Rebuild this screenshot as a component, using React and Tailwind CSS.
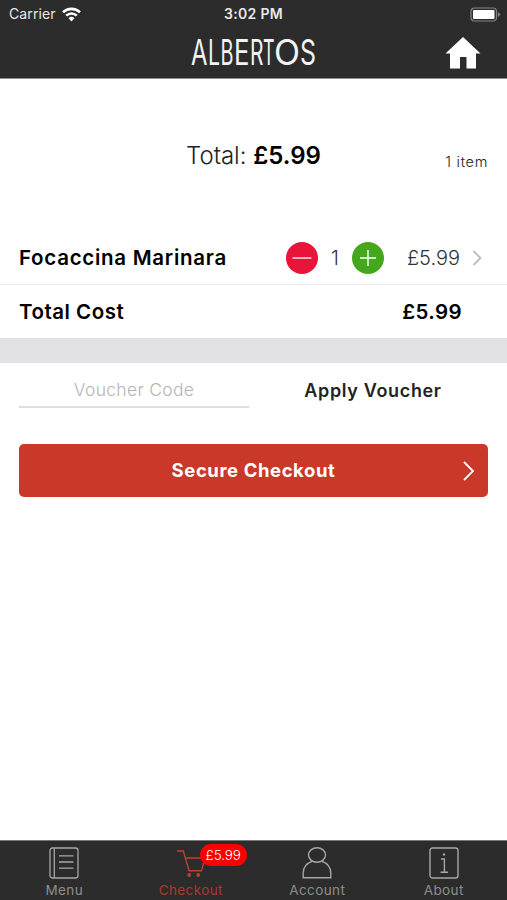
import React from 'react';

const MenuIcon = () => (
    <svg width="30" height="32" viewBox="0 0 30 32" fill="none" stroke="#a6a6a6" strokeWidth="1.3">
        <rect x="1" y="1" width="28" height="30" rx="2.5" />
        <path d="M5.3 1v30" />
        <path d="M10 8.8h14.5M10 15h14.5M10 21.2h14.5" />
    </svg>
);

const CartIcon = () => (
    <svg className="mt-[2px]" width="30" height="28" viewBox="0 0 30 28" fill="none" stroke="#c0402f" strokeWidth="1.4">
        <path d="M1 1h6.3l5.8 19.7h12.4L29 8H9.6" />
        <circle cx="13.2" cy="25" r="1.9" fill="#c0402f" stroke="none" />
        <circle cx="22.2" cy="25" r="1.9" fill="#c0402f" stroke="none" />
    </svg>
);

const AccountIcon = () => (
    <svg width="30" height="32" viewBox="0 0 30 32" fill="none" stroke="#a6a6a6" strokeWidth="1.4">
        <ellipse cx="15" cy="8" rx="8.5" ry="7.2" />
        <path d="M10.3 14.2C5 16.2 1.2 20.5 1.2 26v4.8h27.6V26c0-5.5-3.8-9.8-9.1-11.8" />
    </svg>
);

const AboutIcon = () => (
    <svg width="30" height="32" viewBox="0 0 30 32" fill="none" stroke="#a6a6a6" strokeWidth="1.4">
        <rect x="1" y="1" width="28" height="30" rx="2.5" />
        <path d="M12 12h3.4v13M11.5 25.3h7.5" />
        <circle cx="15" cy="7.5" r="1.2" fill="#a6a6a6" stroke="none" />
    </svg>
);

const StatusBar = () => (
    <div className="grid h-7 grid-cols-[1fr_auto_1fr] items-center text-[14px] leading-7 text-[#e8e8e8]">
        <div className="flex items-center gap-[6px] pl-[9px]">
            <span className="tracking-[0.1px]">Carrier</span>
            <svg width="19" height="15" viewBox="0 0 19 15" fill="none" stroke="#fff" strokeWidth="2.6">
                <path d="M1 5.3a12.2 12.2 0 0 1 17 0" />
                <path d="M4.2 8.6a7.6 7.6 0 0 1 10.6 0" />
                <path d="M9.5 14.5l-3-3.2a4.3 4.3 0 0 1 6 0z" fill="#fff" stroke="none" />
            </svg>
        </div>
        <span className="font-semibold tracking-[0.3px]">3:02 PM</span>
        <div className="flex justify-end pr-[6px]">
            <svg width="31" height="15" viewBox="0 0 31 15">
                <rect x="1" y="1" width="25.5" height="13" rx="3.5" fill="none" stroke="#858585" strokeWidth="1.2" />
                <rect x="3" y="3" width="21.5" height="9" rx="1" fill="#fff" />
                <path d="M28 5v5l2.5-2.5z" fill="#858585" />
            </svg>
        </div>
    </div>
);

// Narrow art deco letters next to a full round O
const logoLetters = [
    { char: 'A', x: 1, width: 16.5 },
    { char: 'L', x: 18, width: 12 },
    { char: 'B', x: 30.5, width: 13 },
    { char: 'E', x: 44, width: 15.5 },
    { char: 'R', x: 60, width: 13.5 },
    { char: 'T', x: 73, width: 11.5 },
    { char: 'O', x: 84, width: 26 },
    { char: 'S', x: 110, width: 16 },
];

const Logo = () => (
    <svg width="128" height="50" viewBox="0 0 128 50" aria-label="Albertos">
        <text y="37" fill="#f3f3f3" fontFamily="Inter, sans-serif" fontSize="35" fontWeight="400">
            {logoLetters.map(({ char, x, width }) => (
                <tspan key={char} x={x} textLength={width} lengthAdjust="spacingAndGlyphs">{char}</tspan>
            ))}
        </text>
    </svg>
);

const Header = () => (
    <header className="h-[79px] shrink-0 border-b border-[#8f8f8f] bg-[#2c2c2c]">
        <StatusBar />
        <div className="grid h-[50px] grid-cols-[1fr_auto_1fr] items-center">
            <div />
            <Logo />
            <div className="flex justify-end pr-[26px]">
                <svg width="36" height="32" viewBox="0 0 36 32" fill="#fff">
                    <path d="M18 0L0.5 16.5H5V31.5h10V20h6.5v11.5H31V16.5h4.5z" />
                </svg>
            </div>
        </div>
    </header>
);

const TabItem = ({ label, icon, active, badge }) => (
    <button className="flex flex-1 flex-col items-center pt-[6px]">
        <span className="relative flex h-8 items-center">
            {icon}
            {badge && (
                <span className="absolute left-[24px] top-[-3px] flex h-[22px] w-[47px] items-center justify-center rounded-full bg-[#fa0000] text-[13.5px] font-light tracking-[-0.1px] text-white">
                    {badge}
                </span>
            )}
        </span>
        <span className={active ? 'mt-[2px] text-[13.5px] leading-[18px] tracking-[0.4px] text-[#a83a2e]' : 'mt-[2px] text-[13.5px] leading-[18px] tracking-[0.4px] text-[#8c8c8c]'}>
            {label}
        </span>
    </button>
);

const App = () => {
    return (
        <div className="flex h-[900px] w-[507px] flex-col overflow-hidden bg-white font-[Inter,sans-serif] text-black">
            <Header />

            <main className="flex flex-1 flex-col">
                {/* Basket summary */}
                <div className="grid h-[152px] grid-cols-[1fr_auto_1fr] items-center">
                    <div />
                    <div className="whitespace-nowrap pt-[2px] text-[24px] font-light text-[#222]">
                        Total: <span className="font-semibold text-black">£5.99</span>
                    </div>
                    <div className="pr-[19px] pt-[13px] text-right text-[14.5px] font-light tracking-[0.7px] text-[#222]">1 item</div>
                </div>

                {/* Item row */}
                <div className="flex h-[54px] items-center border-b border-[#ededed] pl-[19px] pr-[24px]">
                    <span className="w-[267px] pt-[2px] text-[20.5px] font-semibold tracking-[0.72px]">Focaccina Marinara</span>
                    <button className="flex size-8 items-center justify-center rounded-full bg-[#e9143a]">
                        <svg width="20" height="20" viewBox="0 0 20 20" stroke="#fff" strokeWidth="1.3">
                            <path d="M0.5 10h19" />
                        </svg>
                    </button>
                    <span className="w-[34px] text-center text-[20px] font-light text-[#333]">1</span>
                    <button className="flex size-8 items-center justify-center rounded-full bg-[#45a71c]">
                        <svg width="18" height="18" viewBox="0 0 18 18" stroke="#fff" strokeWidth="1.4">
                            <path d="M1 9h16M9 1v16" />
                        </svg>
                    </button>
                    <span className="flex-1 text-right text-[20px] font-light text-[#333]">£5.99</span>
                    <svg className="ml-[12px]" width="11" height="16" viewBox="0 0 11 16" fill="none" stroke="#bdbdbd" strokeWidth="1.8">
                        <path d="M1.5 1l7 7-7 7" />
                    </svg>
                </div>

                {/* Total row */}
                <div className="flex h-[53px] items-center justify-between pl-[19px] pr-[45px] pt-[2px] text-[20.5px] font-semibold">
                    <span className="tracking-[0.5px]">Total Cost</span>
                    <span className="tracking-[0.4px]">£5.99</span>
                </div>

                <div className="h-[25px] bg-[#e1e1e3]" />

                {/* Voucher */}
                <div className="flex h-[45px] px-[19px] text-[17.5px]">
                    <div className="flex w-[230px] items-center justify-center border-b-2 border-[#dedede] pt-[11px] font-light tracking-[0.3px] text-[#b5b5b5]">
                        Voucher Code
                    </div>
                    <button className="ml-[9px] flex flex-1 items-center justify-center pt-[9px] text-[18px] font-semibold tracking-[0.65px] text-[#222]">Apply Voucher</button>
                </div>

                <button className="relative mx-[19px] mt-[36px] flex h-[53px] items-center justify-center rounded-[5px] bg-[#c93829] pt-px text-[18.5px] font-bold tracking-[0.58px] text-white">
                    Secure Checkout
                    <svg className="absolute right-[13px] top-[17px]" width="13" height="20" viewBox="0 0 13 20" fill="none" stroke="#fff" strokeWidth="1.8">
                        <path d="M2 1l9 9-9 9" />
                    </svg>
                </button>
            </main>

            <nav className="flex h-[60px] shrink-0 border-t border-[#777] bg-[#2c2c2c] pl-[1px]">
                <TabItem label="Menu" icon={<MenuIcon />} />
                <TabItem label="Checkout" icon={<CartIcon />} active badge="£5.99" />
                <TabItem label="Account" icon={<AccountIcon />} />
                <TabItem label="About" icon={<AboutIcon />} />
            </nav>
        </div>
    );
};

export default App;
